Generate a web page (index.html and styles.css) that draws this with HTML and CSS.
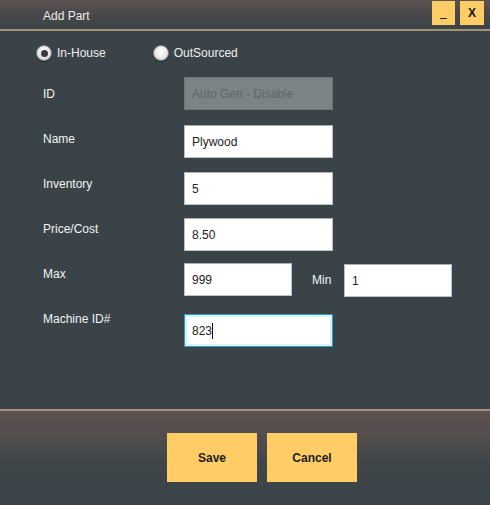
FILE: index.html
```html
<!DOCTYPE html>
<html>
<head>
<meta charset="utf-8">
<link rel="stylesheet" href="styles.css">
</head>
<body>
<div class="window">
  <div class="titlebar">
    <span class="title">Add Part</span>
    <div class="win-btns">
      <div class="win-btn min"><span class="min-glyph"></span></div>
      <div class="win-btn close">X</div>
    </div>
  </div>
  <div class="content">
    <div class="radios">
      <label class="radio"><span class="radio-dot selected"></span><span class="radio-text">In-House</span></label>
      <label class="radio second"><span class="radio-dot"></span><span class="radio-text">OutSourced</span></label>
    </div>
    <div class="form">
      <div class="labels">
        <div class="lbl">ID</div>
        <div class="lbl">Name</div>
        <div class="lbl">Inventory</div>
        <div class="lbl">Price/Cost</div>
        <div class="lbl">Max</div>
        <div class="lbl">Machine ID#</div>
      </div>
      <div class="fields">
        <div class="field disabled f-id">Auto Gen - Disable</div>
        <div class="field f-name">Plywood</div>
        <div class="field f-inv">5</div>
        <div class="field f-price">8.50</div>
        <div class="minmax">
          <div class="field short">999</div>
          <span class="min-lbl">Min</span>
          <div class="field short min-field">1</div>
        </div>
        <div class="field focused f-mach"><span class="caret">823</span></div>
      </div>
    </div>
  </div>
  <div class="footer">
    <div class="btn">Save</div>
    <div class="btn">Cancel</div>
  </div>
</div>
</body>
</html>
```
FILE: styles.css
```css
html, body {
  margin: 0;
  padding: 0;
  background: #3a4347;
}
.window {
  width: 490px;
  height: 505px;
  display: flex;
  flex-direction: column;
  background: #3a4347;
  font-family: "Liberation Sans", Arial, sans-serif;
  font-size: 12px;
  color: #f2f2f2;
  overflow: hidden;
}
.titlebar {
  height: 29px;
  flex: none;
  border-bottom: 2px solid #a39372;
  background: linear-gradient(to bottom, #5c5252 0%, #474749 55%, #3a4448 100%);
  display: flex;
  align-items: center;
  justify-content: space-between;
}
.title {
  padding-left: 43px;
  color: #ececec;
  margin-top: 2px;
}
.win-btns {
  display: flex;
  gap: 5px;
  padding-right: 6px;
  align-self: flex-start;
  margin-top: 1px;
}
.win-btn {
  width: 23px;
  height: 24px;
  background: #ffcc66;
  color: #111;
  font-weight: bold;
  font-size: 12px;
  display: flex;
  align-items: center;
  justify-content: center;
}
.win-btn.close {
  width: 24px;
}
.min-glyph {
  width: 7px;
  height: 1.5px;
  background: #222;
  margin-top: 11px;
}
.content {
  flex: 1;
}
.radios {
  display: flex;
  height: 18px;
  margin-top: 13px;
  padding-left: 36px;
  align-items: center;
}
.radio {
  display: flex;
  align-items: center;
  gap: 5px;
}
.radio.second {
  margin-left: 47px;
}
.radio-dot {
  width: 14px;
  height: 14px;
  border-radius: 50%;
  border: 1px solid #7d8387;
  background: radial-gradient(circle at 50% 40%, #ffffff 0%, #ececec 45%, #c9c9c9 100%);
  box-shadow: 0 1px 1px rgba(0, 0, 0, 0.35);
  display: flex;
  align-items: center;
  justify-content: center;
}
.radio-dot.selected::after {
  content: "";
  width: 7px;
  height: 7px;
  border-radius: 50%;
  background: #3a3a3a;
}
.radio-text {
  color: #f0f0f0;
}
.form {
  display: flex;
}
.labels {
  width: 141px;
  padding-left: 43px;
  padding-top: 25px;
  display: flex;
  flex-direction: column;
}
.lbl {
  height: 45px;
  line-height: 14px;
}
.fields {
  display: flex;
  flex-direction: column;
}
.field {
  box-sizing: border-box;
  width: 149px;
  height: 33px;
  background: #ffffff;
  border: 1px solid #bcc1c3;
  border-top-color: #a9afb1;
  color: #222;
  padding-left: 7px;
  padding-top: 1px;
  display: flex;
  align-items: center;
  font-size: 12px;
}
.f-id { margin-top: 15px; }
.f-name { margin-top: 15px; }
.f-inv { margin-top: 14px; }
.f-price { margin-top: 13px; }
.minmax {
  margin-top: 11px;
  display: flex;
  align-items: center;
}
.field.short {
  width: 108px;
}
.min-lbl {
  margin-left: 20px;
  width: 32px;
  color: #eef4f8;
  margin-top: 1px;
}
.min-field {
  margin-top: 2px;
}
.f-mach { margin-top: 17px; }
.field.disabled {
  background: #7b8385;
  border-color: #6b7476;
  color: #5f6769;
}
.field.focused {
  border: 1px solid #2a9dc4;
  box-shadow: inset 0 0 0 2px #d9f3fb;
}
.caret {
  border-right: 1px solid #111;
  line-height: 16px;
}
.footer {
  flex: none;
  border-top: 2px solid #a39372;
  background: linear-gradient(to bottom, #5c5150 0%, #544e4e 25%, #3f4549 55%, #3a4448 100%);
  display: flex;
  padding-left: 167px;
  padding-top: 22px;
  box-sizing: border-box;
  height: 96px;
  gap: 10px;
  align-items: flex-start;
}
.btn {
  width: 90px;
  height: 49px;
  background: #ffcc66;
  color: #1e1e1e;
  font-weight: bold;
  font-size: 12px;
  display: flex;
  align-items: center;
  justify-content: center;
}
```
